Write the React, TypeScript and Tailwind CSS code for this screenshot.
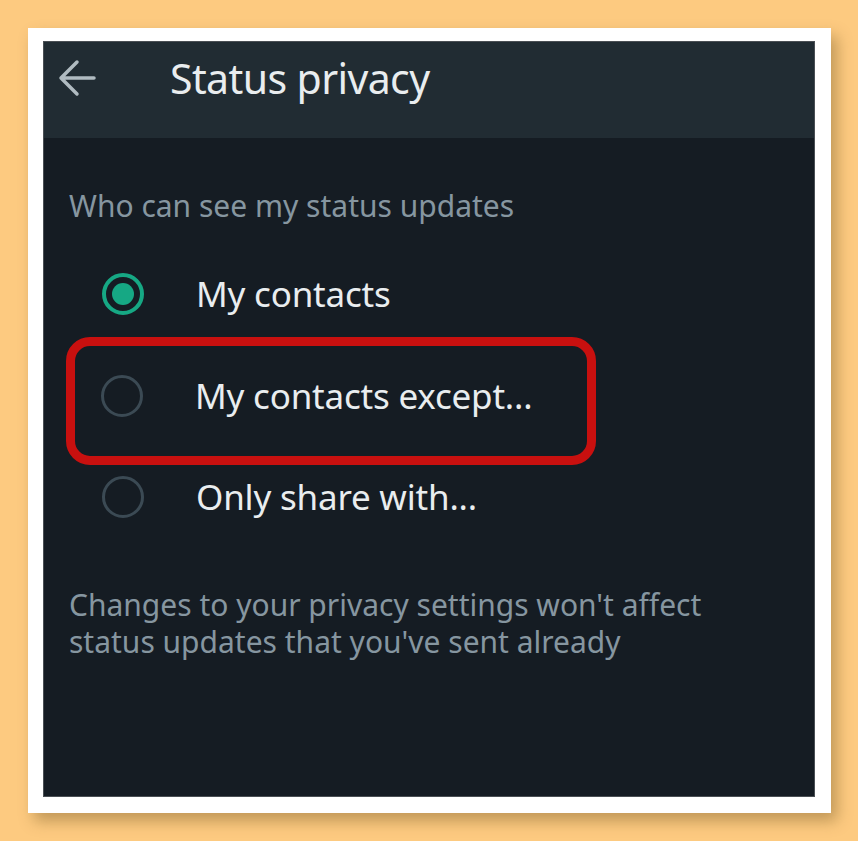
const ArrowLeft = () => (
  <svg width="38" height="38" viewBox="0 0 38 38" fill="none">
    <path
      d="M36 19H3M19 3L3 19l16 16"
      stroke="#b0bbc1"
      strokeWidth="3.5"
      strokeLinecap="round"
      strokeLinejoin="round"
    />
  </svg>
);

const Radio = ({ checked }: { checked?: boolean }) =>
  checked ? (
    <div className="w-[42px] h-[42px] shrink-0 rounded-full border-[4px] border-[#16a884] flex items-center justify-center">
      <div className="w-[22px] h-[22px] rounded-full bg-[#16a884]" />
    </div>
  ) : (
    <div className="w-[42px] h-[42px] shrink-0 rounded-full border-[3px] border-[#3b4a54]" />
  );

const options = [
  { label: "My contacts", checked: true, marked: false },
  { label: "My contacts except...", checked: false, marked: true },
  { label: "Only share with...", checked: false, marked: false },
];

export default function App() {
  return (
    <div
      className="w-[858px] h-[841px] bg-[#fdca80] pt-[28px] pl-[28px]"
      style={{ fontFamily: '"Noto Sans", sans-serif' }}
    >
      <div className="w-[803px] h-[785px] bg-white pt-[13px] pl-[15px] pr-[16px] pb-[16px] shadow-[6px_8px_14px_rgba(120,90,40,0.45)]">
        <div className="w-full h-full bg-[#151c23] border border-[#4a4f54] flex flex-col">
          <div className="h-[96px] bg-[#212c33] flex items-center pb-[24px] shrink-0">
            <div className="w-[126px] pl-[14px] flex items-center">
              <ArrowLeft />
            </div>
            <h1 className="text-[41px] leading-[48px] text-[#e9edef] tracking-[-0.6px]">Status privacy</h1>
          </div>

          <div className="pl-[25px] pt-[48px]">
            <p className="text-[30px] text-[#8696a0] leading-[40px]">Who can see my status updates</p>
          </div>

          <div className="flex flex-col mt-[17px] pl-[23px] w-[530px]">
            {options.map((o) => (
              <div
                key={o.label}
                className={
                  o.marked
                    ? "h-[128px] -mt-[8px] -mb-[19px] pb-[10px] flex items-center border-[9px] border-[#c8100f] rounded-[24px] pl-[26px] -ml-[1px] w-[530px]"
                    : "h-[102px] flex items-center pl-[35px]"
                }
              >
                <Radio checked={o.checked} />
                <span className="ml-[52px] text-[35px] leading-[44px] text-[#e9edef] tracking-[-0.2px] whitespace-nowrap">
                  {o.label}
                </span>
              </div>
            ))}
          </div>

          <div className="pl-[25px] pt-[38px]">
            <p className="text-[30px] leading-[37px] text-[#8696a0]">
              Changes to your privacy settings won't affect
              <br />
              status updates that you've sent already
            </p>
          </div>
        </div>
      </div>
    </div>
  );
}
